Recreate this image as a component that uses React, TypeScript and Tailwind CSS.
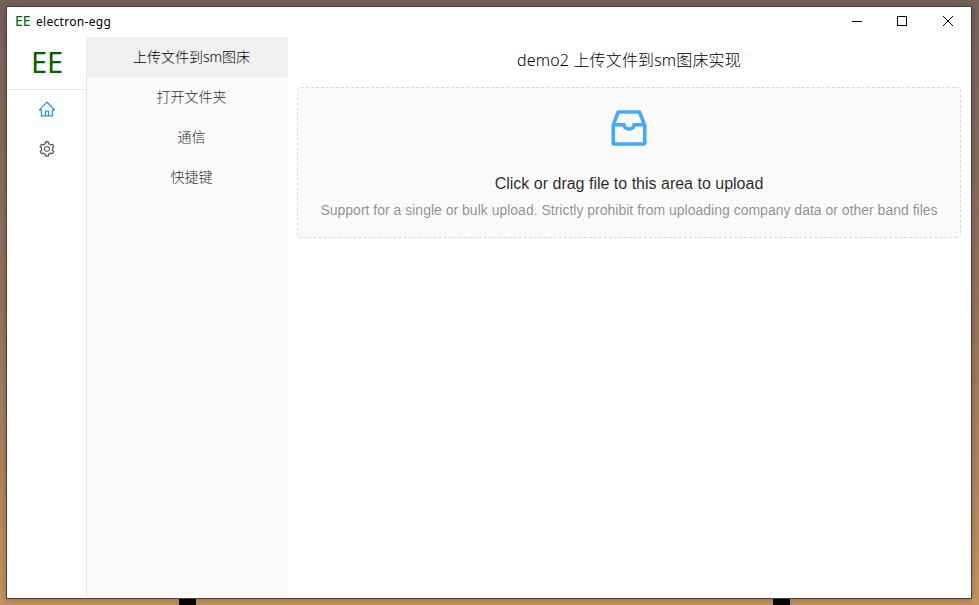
import { AiOutlineHome, AiOutlineInbox, AiOutlineSetting } from "react-icons/ai";

const menu = ["上传文件到sm图床", "打开文件夹", "通信", "快捷键"];

function TitleBar() {
  return (
    <header className="flex h-[30px] shrink-0 items-center pl-2">
      <span className="-mt-[2px] w-[21px] font-['Noto_Sans','Noto_Sans_CJK_SC',sans-serif] text-[14px] leading-[28px] text-[#006400]">EE</span>
      <span className="flex-1 font-['Noto_Sans','Noto_Sans_CJK_SC',sans-serif] text-[12px] leading-[30px] tracking-[0.3px] text-black">electron-egg</span>
      <div className="flex h-full items-center" aria-hidden="true">
        <svg className="h-[30px] w-[45px]" viewBox="0 0 45 30" shapeRendering="crispEdges">
          <path d="M17 14.5h10" stroke="#000" />
        </svg>
        <svg className="h-[30px] w-[45px]" viewBox="0 0 45 30" shapeRendering="crispEdges">
          <path d="M17.5 9.5h9v9h-9z" stroke="#000" fill="none" />
        </svg>
        <svg className="h-[30px] w-[46px]" viewBox="0 0 46 30">
          <path d="M18 9l10 10M28 9L18 19" stroke="#000" fill="none" />
        </svg>
      </div>
    </header>
  );
}

export default function App() {
  return (
    <div className="flex h-[605px] w-[979px] flex-col bg-linear-to-b from-[#75625a] via-[#94735c] to-[#c6945f] pt-[6px] pl-[6px]">
      <div className="flex h-[593px] w-[966px] shrink-0 flex-col border border-[#4b3f38] bg-white shadow-[0_1px_7px_rgba(0,0,0,0.25)]">
        <TitleBar />
        <div className="flex h-[560px]">
          <aside className="flex w-20 flex-col border-r border-[#e8e8e8]">
            <div className="flex h-[53px] justify-center border-b border-[#e8e8e8] pl-px font-['Noto_Sans',sans-serif] text-[29px] leading-[50px] text-[#006400]">
              EE
            </div>
            <div className="flex h-10 items-center justify-center pb-[2px] text-[#1890ff]">
              <AiOutlineHome size={18} />
            </div>
            <div className="flex h-10 items-center justify-center pb-[2px] text-[#595959]">
              <AiOutlineSetting size={18} />
            </div>
          </aside>
          <nav className="w-[200px] bg-[#fafafa] font-['Noto_Sans','Noto_Sans_CJK_SC',sans-serif] text-[14px] font-light">
            {menu.map((label, i) => (
              <div
                key={label}
                className={
                  i === 0
                    ? "h-10 w-[201px] bg-[#f0f0f0] pl-[8px] text-center leading-10 text-black"
                    : "h-10 w-[201px] pl-[8px] text-center leading-10 text-[#303030]"
                }
              >
                {label}
              </div>
            ))}
          </nav>
          <main className="flex flex-1 flex-col pr-[10px] pl-[10px]">
            <h1 className="h-[50px] text-center font-['Noto_Sans','Noto_Sans_CJK_SC',sans-serif] text-[16px] leading-[46px] font-light tracking-[0.15px] text-black">
              demo2 上传文件到sm图床实现
            </h1>
            <section className="flex h-[151px] flex-col items-center rounded-[4px] border border-dashed border-[#d9d9d9] bg-[#fafafa] font-['Liberation_Sans',sans-serif]">
              <AiOutlineInbox size={48} className="mt-4 text-[#40a9ff]" />
              <p className="mt-[20px] text-[16px] leading-6 text-black/85">Click or drag file to this area to upload</p>
              <p className="mt-[3px] text-[14px] leading-[22px] whitespace-nowrap text-black/45">
                Support for a single or bulk upload. Strictly prohibit from uploading company data or other band files
              </p>
            </section>
          </main>
        </div>
      </div>
      <div className="flex h-[6px] shrink-0">
        <div className="ml-[173px] h-full w-[17px] bg-[#080404]" />
        <div className="ml-[577px] h-full w-[17px] bg-[#080404]" />
      </div>
    </div>
  );
}
